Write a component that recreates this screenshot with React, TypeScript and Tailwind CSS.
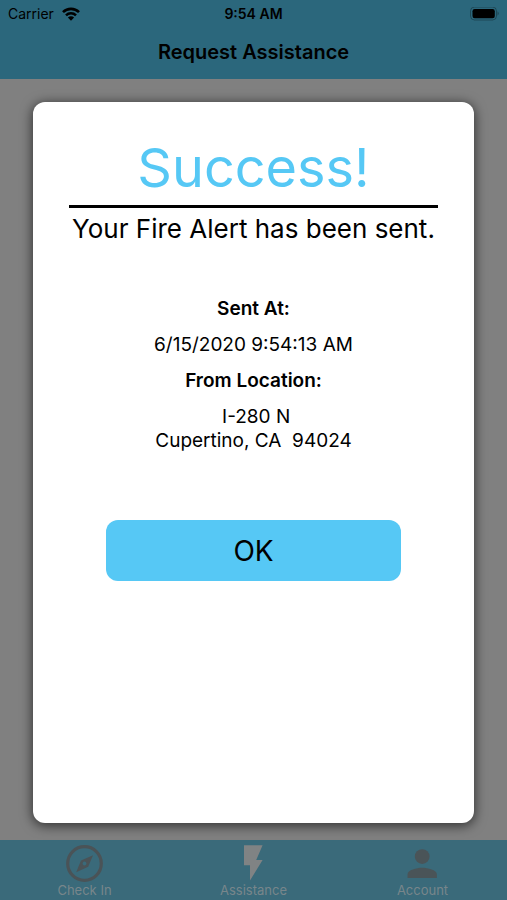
import { useState } from "react";

type Tab = {
  name: string;
  icon: React.ReactNode;
};

const CompassIcon = () => (
  <svg viewBox="0 0 37 37" className="size-[37px] text-[#4a5357]" aria-hidden="true">
    <circle cx="18.5" cy="18.5" r="16.8" fill="none" stroke="currentColor" strokeWidth="3.2" />
    <path
      fill="currentColor"
      fillRule="evenodd"
      d="M27 10.2 L22.2 21.8 L10.2 27.2 L15 15.4 Z M18.5 16.6 a1.9 1.9 0 1 0 0.01 0 Z"
    />
  </svg>
);

const BoltIcon = () => (
  <svg viewBox="0 0 37 37" className="size-[37px] text-[#808384]" aria-hidden="true">
    <path fill="currentColor" d="M9 0.3 H27.6 L21.2 15 H27.6 L15 35.5 V20.2 H9 Z" />
  </svg>
);

const PersonIcon = () => (
  <svg viewBox="0 0 37 37" className="size-[37px] text-[#4a5458]" aria-hidden="true">
    <circle cx="18.2" cy="11.6" r="7.4" fill="currentColor" />
    <path fill="currentColor" d="M3.5 33 V29.4 C3.5 24.9 12.7 22.7 18.2 22.7 S32.9 24.9 32.9 29.4 V33 Z" />
  </svg>
);

const tabs: Tab[] = [
  { name: "Check In", icon: <CompassIcon /> },
  { name: "Assistance", icon: <BoltIcon /> },
  { name: "Account", icon: <PersonIcon /> },
];

const StatusBar = () => (
  <div className="grid h-7 grid-cols-3 items-center px-2 text-sm leading-4">
    <div className="flex items-center gap-2">
      <span>Carrier</span>
      <svg viewBox="0 0 18 14" className="h-3.5 w-[18px]" aria-hidden="true">
        <path fill="none" stroke="currentColor" strokeWidth="2.6" d="M1 5.2 A11.3 11.3 0 0 1 17 5.2" />
        <path fill="none" stroke="currentColor" strokeWidth="2.5" d="M4 8.3 A7 7 0 0 1 14 8.3" />
        <path fill="currentColor" d="M9 13.8 L5.9 10.6 A4.4 4.4 0 0 1 12.1 10.6 Z" />
      </svg>
    </div>
    <span className="text-center font-semibold">9:54 AM</span>
    <svg viewBox="0 0 30 14" className="h-3.5 w-[30px] justify-self-end" aria-hidden="true">
      <rect x="1.5" y="0" width="26" height="13" rx="4" fill="none" stroke="currentColor" strokeOpacity="0.3" />
      <rect x="3.5" y="2" width="22.3" height="9.2" rx="2.2" fill="currentColor" />
      <path fill="currentColor" fillOpacity="0.3" d="M28.5 4.3 Q31 6.5 28.5 8.7 Z" />
    </svg>
  </div>
);

export default function App() {
  const [open, setOpen] = useState(true);

  return (
    <div className="flex min-h-screen flex-col bg-[#808080] font-['Inter',sans-serif] text-black">
      <header className="bg-[#2b677c]">
        <StatusBar />
        <h1 className="pt-2.5 pb-[13px] text-center text-xl leading-7 font-semibold">
          Request Assistance
        </h1>
      </header>

      <main className="flex flex-1 flex-col px-[33px] pt-[23px] pb-[17px]">
        {open && (
          <section
            role="dialog"
            aria-labelledby="alert-title"
            className="flex flex-1 flex-col rounded-xl bg-white px-9 pt-8 text-center shadow-[0_2px_12px_1px_rgba(0,0,0,0.6)]"
          >
            <h2
              id="alert-title"
              className="border-b-3 border-black pb-1 text-[54px] leading-[67px] text-[#56c8f5]"
            >
              Success!
            </h2>
            <p className="text-[26px] leading-[42px] whitespace-nowrap">
              Your Fire Alert has been sent.
            </p>

            <dl className="pt-[47px] text-[19px] leading-6">
              <dt className="font-semibold">Sent At:</dt>
              <dd className="pt-3">6/15/2020 9:54:13 AM</dd>
              <dt className="pt-3 font-semibold">From Location:</dt>
              <dd className="pt-3">
                &nbsp;I-280 N
                <br />
                Cupertino, CA &nbsp;94024
              </dd>
            </dl>

            <button
              type="button"
              onClick={() => setOpen(false)}
              className="mx-[37px] mt-[67px] rounded-xl bg-[#56c8f5] pt-[13px] pb-[11px] text-[28px] leading-[37px]"
            >
              OK
            </button>
          </section>
        )}
      </main>

      <nav className="grid grid-cols-3 bg-[#3a6a7a]">
        {tabs.map((tab) => (
          <a
            key={tab.name}
            href="#"
            className="flex flex-col items-center pt-[5px] pb-0.5 text-[13px] leading-4 text-[#78868b]"
          >
            {tab.icon}
            {tab.name}
          </a>
        ))}
      </nav>
    </div>
  );
}
